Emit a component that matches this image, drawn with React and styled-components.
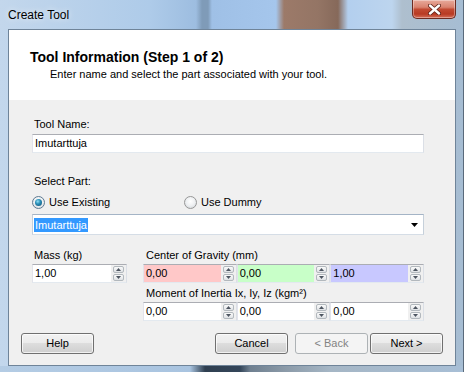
import React from "react";
import styled, { createGlobalStyle } from "styled-components";

const GlobalStyle = createGlobalStyle`
  html, body {
    margin: 0;
    padding: 0;
  }
  body {
    font-family: "Liberation Sans", Arial, sans-serif;
    font-size: 11px;
    color: #000;
  }
`;

const Window = styled.div`
  width: 464px;
  height: 372px;
  box-sizing: border-box;
  display: flex;
  flex-direction: column;
  overflow: hidden;
  border-right: 1px solid #5a6a7b;
  background: linear-gradient(
    90deg,
    #c3d7ec 0px,
    #aecbe9 150px,
    #9dbde0 196px,
    #7f9bb8 202px,
    #7f9bb8 208px,
    #9fc0e6 212px,
    #a5c6ec 276px,
    #9c7a69 284px,
    #947565 318px,
    #86695a 338px,
    #b3cfee 348px,
    #bdd5ee 392px,
    #aebfce 402px,
    #a6bdd3 464px
  );
`;

const TitleBar = styled.div`
  flex: none;
  height: 29px;
  display: flex;
  justify-content: space-between;
  align-items: flex-start;
  padding: 0 7px 0 8px;
`;

const Caption = styled.div`
  margin-top: 8px;
  font-size: 12px;
  line-height: 14px;
  color: #000;
  text-shadow: 0 0 6px rgba(255, 255, 255, 0.9);
`;

const CloseButton = styled.div`
  width: 44px;
  height: 19px;
  box-sizing: border-box;
  display: flex;
  align-items: center;
  justify-content: center;
  border: 1px solid #6d2c22;
  border-top: none;
  border-radius: 0 0 5px 5px;
  background: linear-gradient(
    #e8aa9b 0%,
    #d9836f 40%,
    #c24a32 52%,
    #b83a23 78%,
    #d5705a 100%
  );
  box-shadow: inset 0 0 0 1px rgba(255, 255, 255, 0.35);
`;

const Client = styled.div`
  flex: 1;
  margin: 0 7px 0 8px;
  border: 1px solid #6f8499;
  background: #f0f0f0;
  display: flex;
  flex-direction: column;
`;

const BottomFrame = styled.div`
  flex: none;
  height: 6px;
  background: linear-gradient(
    90deg,
    #b4cce4 0px,
    #a9c4e0 190px,
    #2f3f50 205px,
    #34465a 240px,
    #6f8090 250px,
    #8b9aa8 285px,
    #a5b6c5 330px,
    #a8bfd6 464px
  );
`;

const Header = styled.div`
  height: 70px;
  box-sizing: border-box;
  background: #fff;
  padding: 19px 0 0 21px;
`;

const HeaderTitle = styled.div`
  font-size: 14px;
  line-height: 16px;
  font-weight: bold;
`;

const HeaderSub = styled.div`
  margin: 3px 0 0 20px;
  font-size: 11px;
  line-height: 13px;
`;

const Body = styled.div`
  padding: 18px 31px 0 23px;
  display: flex;
  flex-direction: column;
`;

const Label = styled.div`
  margin-left: ${(p) => p.$indent ?? 2}px;
  margin-top: ${(p) => p.$top ?? 0}px;
  line-height: 13px;
  height: 13px;
  white-space: nowrap;
`;

const TextBox = styled.div`
  margin-top: 3px;
  height: 19px;
  box-sizing: border-box;
  border: 1px solid;
  border-color: #abadb3 #dbdfe6 #e3e9ef #e2e3ea;
  background: #fff;
  padding-left: 2px;
  line-height: 17px;
`;

const RadioRow = styled.div`
  margin-top: 8px;
  display: grid;
  grid-template-columns: 152px auto;
  height: 13px;
`;

const RadioOption = styled.label`
  display: flex;
  align-items: center;
  gap: 4px;
  line-height: 13px;
`;

const RadioCircle = styled.span`
  width: 13px;
  height: 13px;
  box-sizing: border-box;
  border-radius: 50%;
  border: 1px solid ${(p) => (p.$checked ? "#5d7a92" : "#979797")};
  background: radial-gradient(circle at 50% 40%, #ffffff 0%, #eef0f2 50%, #cdd2d6 100%);
  display: flex;
  align-items: center;
  justify-content: center;

  &::after {
    content: "";
    width: 7px;
    height: 7px;
    border-radius: 50%;
    display: ${(p) => (p.$checked ? "block" : "none")};
    background: radial-gradient(circle at 40% 35%, #8fe0f5 0%, #2a8fb8 40%, #0c4a6e 100%);
  }
`;

const Combo = styled.div`
  margin-top: 5px;
  height: 21px;
  box-sizing: border-box;
  border: 1px solid;
  border-color: #a4b4c6 #c6d0da #d5dde6 #c6d0da;
  background: #fff;
  display: flex;
  align-items: center;
  justify-content: space-between;
  padding: 0 5px 0 1px;
`;

const Selected = styled.span`
  background: #3399ff;
  color: #fff;
  line-height: 14px;
  padding: 0 1px;
`;

const ValuesGrid = styled.div`
  margin-top: 14px;
  display: grid;
  grid-template-columns: 95px 281px;
  column-gap: 16px;
`;

const Column = styled.div`
  display: flex;
  flex-direction: column;
`;

const FieldRow = styled.div`
  margin-top: 2px;
  display: grid;
  grid-template-columns: repeat(${(p) => p.$count}, 1fr);
`;

const NumberField = styled.div`
  height: 19px;
  box-sizing: border-box;
  display: flex;
  border: 1px solid;
  border-color: #abadb3 #dbdfe6 #e3e9ef #e2e3ea;
  background: #fff;
`;

const NumberValue = styled.div`
  flex: 1;
  background: ${(p) => p.$bg || "#fff"};
  padding-left: 2px;
  line-height: 17px;
`;

const Spinner = styled.div`
  width: 15px;
  box-sizing: border-box;
  padding: 1px 2px 1px 2px;
  background: #f0f0f0;
  display: flex;
  flex-direction: column;
  gap: 1px;
`;

const SpinButton = styled.div`
  flex: 1;
  border: 1px solid #b2b8bd;
  border-radius: 2px;
  background: linear-gradient(#fafafa, #dfe2e5);
  display: flex;
  align-items: center;
  justify-content: center;
`;

const ButtonBar = styled.div`
  margin-top: auto;
  padding: 0 12px 11px 12px;
  display: flex;
  align-items: center;
`;

const Button = styled.div`
  width: 73px;
  height: 21px;
  box-sizing: border-box;
  margin-left: ${(p) => p.$gap || 0}px;
  border: 1px solid ${(p) => (p.$disabled ? "#adb2b5" : "#707070")};
  border-radius: 3px;
  background: ${(p) =>
    p.$disabled
      ? "#f4f4f4"
      : "linear-gradient(#f2f2f2 0%, #ebebeb 50%, #dddddd 50%, #cfcfcf 100%)"};
  box-shadow: ${(p) => (p.$disabled ? "none" : "inset 0 0 0 1px rgba(255,255,255,0.7)")};
  color: ${(p) => (p.$disabled ? "#838383" : "#000")};
  display: flex;
  align-items: center;
  justify-content: center;
  line-height: 13px;
`;

const Spacer = styled.div`
  flex: 1;
`;

const Triangle = ({ up }) => (
  <svg width="5" height="3" viewBox="0 0 5 3">
    <path d={up ? "M0 3 L2.5 0 L5 3 Z" : "M0 0 L5 0 L2.5 3 Z"} fill="#4d5560" />
  </svg>
);

const NumberInput = ({ value, bg }) => (
  <NumberField>
    <NumberValue $bg={bg}>{value}</NumberValue>
    <Spinner>
      <SpinButton>
        <Triangle up />
      </SpinButton>
      <SpinButton>
        <Triangle />
      </SpinButton>
    </Spinner>
  </NumberField>
);

export default function App() {
  return (
    <>
      <GlobalStyle />
      <Window>
        <TitleBar>
          <Caption>Create Tool</Caption>
          <CloseButton>
            <svg width="13" height="11" viewBox="0 0 13 11">
              <path d="M2 1.5 L11 9.5 M11 1.5 L2 9.5" stroke="#5a1e14" strokeWidth="4" strokeLinecap="round" />
              <path d="M2 1.5 L11 9.5 M11 1.5 L2 9.5" stroke="#ffffff" strokeWidth="2.4" strokeLinecap="round" />
            </svg>
          </CloseButton>
        </TitleBar>
        <Client>
          <Header>
            <HeaderTitle>Tool Information (Step 1 of 2)</HeaderTitle>
            <HeaderSub>Enter name and select the part associated with your tool.</HeaderSub>
          </Header>
          <Body>
            <Label>Tool Name:</Label>
            <TextBox>Imutarttuja</TextBox>
            <Label $top={22}>Select Part:</Label>
            <RadioRow>
              <RadioOption>
                <RadioCircle $checked />
                Use Existing
              </RadioOption>
              <RadioOption>
                <RadioCircle />
                Use Dummy
              </RadioOption>
            </RadioRow>
            <Combo>
              <Selected>Imutarttuja</Selected>
              <svg width="7" height="4" viewBox="0 0 7 4">
                <path d="M0 0 L7 0 L3.5 4 Z" fill="#000" />
              </svg>
            </Combo>
            <ValuesGrid>
              <Column>
                <Label>Mass (kg)</Label>
                <FieldRow $count={1}>
                  <NumberInput value="1,00" />
                </FieldRow>
              </Column>
              <Column>
                <Label $indent={3}>Center of Gravity (mm)</Label>
                <FieldRow $count={3}>
                  <NumberInput value="0,00" bg="#ffc8c8" />
                  <NumberInput value="0,00" bg="#c8ffc8" />
                  <NumberInput value="1,00" bg="#c8c8ff" />
                </FieldRow>
                <Label $indent={3} $top={4}>
                  Moment of Inertia Ix, Iy, Iz (kgm²)
                </Label>
                <FieldRow $count={3}>
                  <NumberInput value="0,00" />
                  <NumberInput value="0,00" />
                  <NumberInput value="0,00" />
                </FieldRow>
              </Column>
            </ValuesGrid>
          </Body>
          <ButtonBar>
            <Button>Help</Button>
            <Spacer />
            <Button>Cancel</Button>
            <Button $gap={7} $disabled>
              &lt; Back
            </Button>
            <Button $gap={2}>Next &gt;</Button>
          </ButtonBar>
        </Client>
        <BottomFrame />
      </Window>
    </>
  );
}
